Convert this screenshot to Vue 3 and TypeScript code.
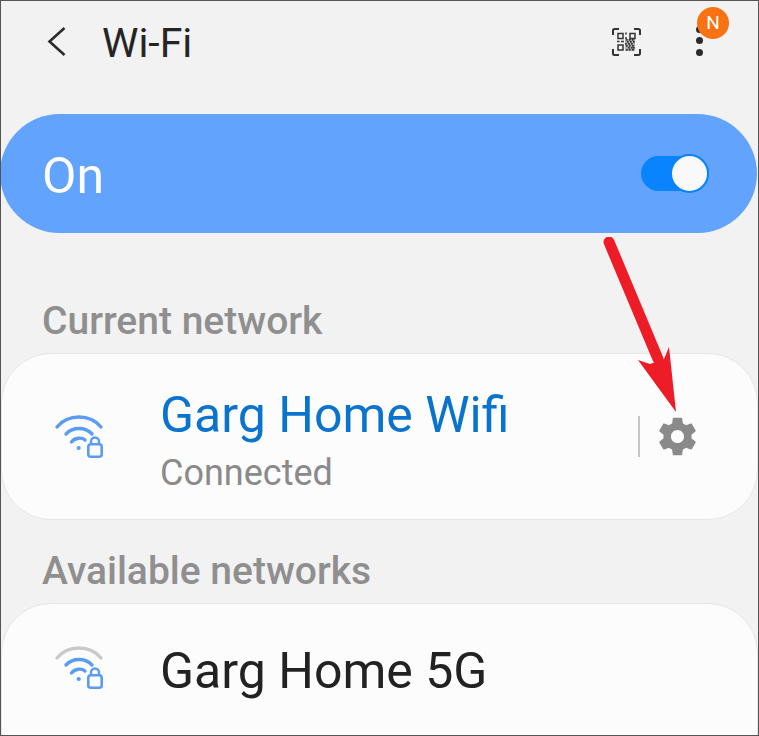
<script setup lang="ts">
const denseCells: [number, number][] = [
  [14, 11], [17, 11], [20, 11], [15, 13], [18, 13], [21, 13], [13, 15], [16, 15], [19, 15],
  [14, 17], [17, 17], [20, 17], [16, 19], [19, 19], [21, 19], [14, 21], [17, 21], [20, 21]
]
</script>

<template>
  <div class="page">
    <header class="top">
      <svg class="back" width="20" height="32" viewBox="0 0 20 32"><path d="M17.500 2 L2.500 15.500 L17.500 29" fill="none" stroke="#2b2b2b" stroke-width="2.600"/></svg>
      <h1 class="title">Wi-Fi</h1>
      <svg class="qr" width="30" height="28" viewBox="0 0 30 28" fill="none" stroke="#333">
        <path d="M1 7V2.500A1.500 1.500 0 0 1 2.500 1H7M22 1h4.500A1.500 1.500 0 0 1 28 2.500V7M28 21v4.500a1.500 1.500 0 0 1-1.500 1.500H22M7 27H2.500A1.500 1.500 0 0 1 1 25.500V21" stroke-width="2"/>
        <rect x="6" y="5.500" width="5" height="5" stroke-width="1.500"/>
        <rect x="18" y="5.500" width="5" height="5" stroke-width="1.500"/>
        <rect x="6" y="17" width="5" height="5" stroke-width="1.500"/>
        <path d="M14 4.500v2M14 9v2M5 13.500h2.500M9 13.500h3" stroke-width="1.500"/>
        <g fill="#333" stroke="none">
          <rect x="13" y="11" width="10" height="12" opacity=".35"/>
          <rect v-for="(c, i) in denseCells" :key="i" :x="c[0]" :y="c[1]" width="1.700" height="1.700"/>
        </g>
      </svg>
      <div class="more">
        <i></i><i></i><i></i>
        <span class="badge">N</span>
      </div>
    </header>

    <section class="on-bar">
      <span class="on-text">On</span>
      <span class="switch"><span class="knob"></span></span>
    </section>

    <h2 class="label first">Current network</h2>
    <article class="card current">
      <svg class="wifi" width="50" height="44" viewBox="0 0 50 44" fill="none" stroke="#5a9cf5" stroke-width="3.400" stroke-linecap="round">
        <path d="M3 12C14 -1.300 36 -1.300 47 12"/>
        <path d="M12 19C19 11.700 31 11.700 38 19"/>
        <path d="M17.500 27C21 22.300 28 22.300 31 25"/>
        <circle cx="24.700" cy="33" r="2.100" fill="#5a9cf5" stroke="none"/>
        <rect x="34.300" y="29.300" width="13.400" height="12.400" rx="2.500" stroke-width="2.600"/>
        <path d="M37 29v-2.500a4 4 0 0 1 8 0v2.500" stroke-width="2.400"/>
      </svg>
      <div class="net-text">
        <div class="net-name blue">Garg Home Wifi</div>
        <div class="net-sub">Connected</div>
      </div>
      <span class="divider"></span>
      <svg class="gear" width="45" height="45" viewBox="0 0 24 24"><path fill="#8a8a8a" d="M19.430 12.980c.04-.32.070-.64.070-.98s-.03-.66-.07-.98l2.110-1.650c.19-.15.240-.42.120-.64l-2-3.460c-.12-.22-.39-.3-.61-.22l-2.490 1c-.52-.4-1.080-.73-1.690-.98l-.38-2.650A.49.49 0 0 0 14 2h-4c-.25 0-.46.18-.49.420l-.38 2.650c-.61.25-1.170.59-1.690.98l-2.490-1c-.23-.09-.49 0-.61.220l-2 3.460c-.13.220-.07.490.12.640l2.110 1.650c-.04.320-.07.650-.07.980s.03.660.07.980l-2.110 1.650c-.19.150-.24.420-.12.640l2 3.460c.12.220.39.300.61.220l2.490-1c.52.400 1.080.730 1.690.980l.38 2.650c.03.240.240.420.490.420h4c.25 0 .460-.18.490-.42l.38-2.650c.61-.25 1.170-.59 1.690-.98l2.490 1c.23.090.49 0 .61-.22l2-3.460c.12-.22.07-.49-.12-.64l-2.110-1.650zM12 15.500c-1.930 0-3.500-1.570-3.500-3.500s1.570-3.500 3.500-3.500 3.500 1.570 3.500 3.500-1.570 3.500-3.500 3.500z"/></svg>
    </article>

    <h2 class="label second">Available networks</h2>
    <article class="card avail">
      <svg class="wifi" width="50" height="44" viewBox="0 0 50 44" fill="none" stroke="#5a9cf5" stroke-width="3.400" stroke-linecap="round">
        <path d="M3 12C14 -1.300 36 -1.300 47 12" stroke="#c9c9c9"/>
        <path d="M12 19C19 11.700 31 11.700 38 19"/>
        <path d="M17.500 27C21 22.300 28 22.300 31 25"/>
        <circle cx="24.700" cy="33" r="2.100" fill="#5a9cf5" stroke="none"/>
        <rect x="34.300" y="29.300" width="13.400" height="12.400" rx="2.500" stroke-width="2.600"/>
        <path d="M37 29v-2.500a4 4 0 0 1 8 0v2.500" stroke-width="2.400"/>
      </svg>
      <div class="net-text">
        <div class="net-name">Garg Home 5G</div>
      </div>
    </article>

    <svg class="arrow" width="100" height="190" viewBox="0 0 100 190">
      <path d="M11 5 L60 122" fill="none" stroke="#ee1c27" stroke-width="11" stroke-linecap="round"/>
      <path d="M78 175 L40 123 L52 127 L66 122 L71 110 Z" fill="#ee1c27"/>
    </svg>
  </div>
</template>

<style scoped>
.page {
  position: relative;
  box-sizing: border-box;
  width: 759px;
  height: 736px;
  overflow: hidden;
  background: #f2f2f2;
  border: 1px solid #555;
  font-family: Roboto, "Noto Sans", sans-serif;
}
.top {
  display: flex;
  align-items: center;
  height: 82px;
  padding-left: 46px;
}
.title {
  margin: 0 0 0 35px;
  font-size: 41px;
  font-weight: 400;
  color: #252525;
  line-height: 48px;
  padding-top: 2px;
  flex: 1;
}
.qr { margin-right: 54px; }
.more {
  position: relative;
  width: 7px;
  height: 30px;
  margin-right: 55px;
  margin-top: -3px;
  display: flex;
  flex-direction: column;
  justify-content: space-between;
}
.more i {
  display: block;
  width: 7px;
  height: 7px;
  border-radius: 50%;
  background: #2a2a2a;
}
.badge {
  position: absolute;
  left: 1px;
  top: -19px;
  width: 32px;
  height: 32px;
  border-radius: 50%;
  background: #f97212;
  color: #fff;
  font-size: 19px;
  line-height: 32px;
  text-align: center;
}
.on-bar {
  box-sizing: border-box;
  display: flex;
  align-items: center;
  justify-content: space-between;
  width: 757px;
  height: 119px;
  margin: 31px 0 0 -1px;
  padding: 0 48px 0 42px;
  background: #62a3fd;
  border-radius: 60px;
}
.on-text {
  color: #fff;
  font-size: 50px;
  line-height: 60px;
  padding-top: 4px;
}
.switch {
  position: relative;
  width: 68px;
  height: 35px;
  border-radius: 18px;
  background: #0a84fe;
}
.knob {
  position: absolute;
  right: 0;
  top: -2px;
  box-sizing: border-box;
  width: 39px;
  height: 39px;
  border-radius: 50%;
  background: #f9f9f9;
  border: 2px solid #0a84fe;
}
.label {
  margin: 0;
  color: #8f8f8f;
  font-size: 39px;
  font-weight: 500;
  line-height: 44px;
  padding-left: 41px;
}
.label.first { margin-top: 66px; }
.label.second { margin-top: 29px; }
.card {
  box-sizing: border-box;
  display: flex;
  align-items: center;
  width: 757px;
  background: #fcfcfc;
  border: 1px solid #e6e6e6;
  border-radius: 50px;
  padding-left: 52px;
}
.current {
  height: 167px;
  margin-top: 10px;
}
.avail {
  height: 170px;
  margin-top: 10px;
  padding-bottom: 40px;
  border-radius: 50px 50px 0 0;
}
.wifi { flex: none; }
.net-text {
  flex: 1;
  margin-left: 56px;
  margin-top: 7px;
}
.avail .net-text { margin-top: 5px; }
.net-name {
  font-size: 50px;
  line-height: 56px;
  color: #222;
}
.net-name.blue { color: #0a73ce; }
.net-sub {
  margin-top: 10px;
  font-size: 36px;
  line-height: 40px;
  color: #8a8a8a;
}
.divider {
  width: 2px;
  height: 41px;
  background: #c6c6c6;
  margin-right: 15px;
}
.gear { margin-right: 57px; }
.arrow {
  position: absolute;
  left: 597px;
  top: 236px;
}
</style>

<style>
html, body { margin: 0; padding: 0; background: #f2f2f2; }
</style>
